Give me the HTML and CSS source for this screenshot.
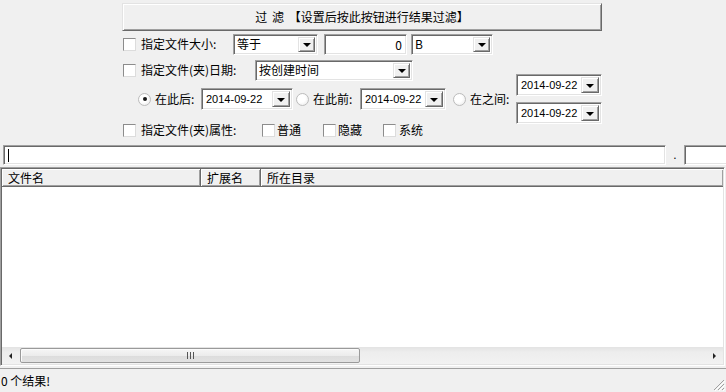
FILE: index.html
```html
<!DOCTYPE html>
<html lang="zh-CN">
<head>
    <meta charset="UTF-8">
    <title>文件过滤</title>
    <link rel="stylesheet" href="styles.css">
</head>
<body>
    <!-- Filter options -->
    <div class="filter-panel">
        <div class="filter-btn">过 滤 【设置后按此按钮进行结果过滤】</div>

        <div class="row row-size">
            <span class="check"></span>
            <span class="label lbl-size">指定文件大小:</span>
            <div class="combo w-op"><span class="combo-text">等于</span><span class="drop"></span></div>
            <div class="field num">0</div>
            <div class="combo w-unit"><span class="combo-text">B</span><span class="drop"></span></div>
        </div>

        <div class="row row-date">
            <span class="check"></span>
            <span class="label lbl-date">指定文件(夹)日期:</span>
            <div class="combo w-mode"><span class="combo-text">按创建时间</span><span class="drop"></span></div>
        </div>

        <div class="row row-range">
            <span class="radio on r-after"></span>
            <span class="label lbl-after">在此后:</span>
            <div class="combo date w-d1"><span class="combo-text">2014-09-22</span><span class="drop"></span></div>
            <span class="radio r-before"></span>
            <span class="label lbl-before">在此前:</span>
            <div class="combo date w-d2"><span class="combo-text">2014-09-22</span><span class="drop"></span></div>
            <span class="radio r-between"></span>
            <span class="label lbl-between">在之间:</span>
            <div class="date-stack">
                <div class="combo date"><span class="combo-text">2014-09-22</span><span class="drop"></span></div>
                <div class="combo date"><span class="combo-text">2014-09-22</span><span class="drop"></span></div>
            </div>
        </div>

        <div class="row row-attr">
            <span class="check"></span>
            <span class="label lbl-attr">指定文件(夹)属性:</span>
            <span class="check"></span>
            <span class="label lbl-normal">普通</span>
            <span class="check"></span>
            <span class="label lbl-hidden">隐藏</span>
            <span class="check"></span>
            <span class="label lbl-system">系统</span>
        </div>
    </div>

    <!-- Path / extension inputs -->
    <div class="path-row">
        <div class="field path-input"><span class="caret"></span></div>
        <span class="dot">.</span>
        <div class="field ext-input"></div>
    </div>

    <!-- Result list -->
    <div class="listview">
        <div class="lv-head">
            <span class="col c-name">文件名</span>
            <span class="col c-ext">扩展名</span>
            <span class="col c-dir">所在目录</span>
        </div>
        <div class="lv-body"></div>
        <div class="hscroll">
            <span class="arrow left"></span>
            <div class="track">
                <div class="thumb"><span class="grip"></span></div>
            </div>
            <span class="arrow right"></span>
        </div>
    </div>

    <!-- Status bar -->
    <div class="statusbar">
        <span class="status-text">0 个结果!</span>
        <svg class="size-grip" width="12" height="12" viewBox="0 0 12 12">
            <path d="M11 1 L1 11 M11 5 L5 11 M11 9 L9 11" stroke="#a0a0a0" stroke-width="1"/>
            <path d="M12 2 L2 12 M12 6 L6 12 M12 10 L10 12" stroke="#ffffff" stroke-width="1"/>
        </svg>
    </div>
</body>
</html>
```

FILE: styles.css
```css
/* Base window */
* {
    box-sizing: border-box;
}

body {
    margin: 0;
    width: 726px;
    height: 392px;
    overflow: hidden;
    background-color: #f0f0f0;
    font-family: "Noto Sans CJK SC", "Liberation Sans", sans-serif;
    font-size: 12px;
    line-height: 16px;
    color: #000;
}

/* Filter options panel */
.filter-panel {
    margin-left: 122px;
    width: 480px;
    padding-top: 3px;
}

.filter-btn {
    height: 28px;
    display: flex;
    align-items: center;
    justify-content: center;
    white-space: pre;
    word-spacing: 2px;
    border: 1px solid;
    border-color: #e3e3e3 #696969 #696969 #e3e3e3;
    box-shadow: inset 1px 1px #fff, inset -1px -1px #a0a0a0;
}

.row {
    display: flex;
    align-items: center;
    white-space: nowrap;
}

.row-size { height: 22px; margin-top: 2px; }
.row-date { height: 22px; margin-top: 4px; }
.row-range { height: 22px; margin-top: 7px; }
.row-attr { height: 18px; margin-top: 11px; }

.label {
    flex-shrink: 0;
}

.lbl-size { margin-left: 5px; width: 92px; }
.lbl-date { margin-left: 5px; width: 114px; }
.lbl-attr { margin-left: 5px; width: 121px; }
.lbl-normal { margin-left: 2px; width: 46px; }
.lbl-hidden { margin-left: 2px; width: 45px; }
.lbl-system { margin-left: 3px; }
.lbl-after { margin-left: 4px; width: 46px; }
.lbl-before { margin-left: 4px; width: 47px; }
.lbl-between { margin-left: 4px; width: 46px; }

/* Check boxes and radio buttons */
.check {
    flex-shrink: 0;
    width: 13px;
    height: 13px;
    margin-left: 1px;
    background-color: #fff;
    border: 1px solid;
    border-color: #8c8c8c #dcdcdc #dcdcdc #8c8c8c;
}

.row-attr .check + .label + .check {
    margin-left: 0;
}

.radio {
    flex-shrink: 0;
    width: 13px;
    height: 13px;
    border-radius: 50%;
    border: 1px solid #bcbcbc;
    background: radial-gradient(circle at 40% 40%, #fff 40%, #e6e6e6 100%);
    display: flex;
    align-items: center;
    justify-content: center;
}

.radio.on::after {
    content: "";
    width: 4px;
    height: 4px;
    border-radius: 50%;
    background-color: #1a1a1a;
}

.r-after { margin-left: 16px; }
.r-before { margin-left: 3px; }
.r-between { margin-left: 7px; }

/* Sunken fields */
.field,
.combo {
    flex-shrink: 0;
    background-color: #fff;
    border: 1px solid;
    border-color: #a0a0a0 #fff #fff #a0a0a0;
    box-shadow: inset 1px 1px #696969, inset -1px -1px #e3e3e3;
}

.field.num {
    margin-left: 6px;
    width: 83px;
    height: 21px;
    padding-right: 4px;
    text-align: right;
    line-height: 19px;
}

/* Combo boxes */
.combo {
    display: flex;
    align-items: stretch;
    height: 21px;
    padding: 2px;
}

.combo-text {
    flex: 1;
    padding-left: 1px;
    display: flex;
    align-items: center;
    overflow: hidden;
}

.drop {
    width: 17px;
    background-color: #f0f0f0;
    border: 1px solid;
    border-color: #e3e3e3 #696969 #696969 #e3e3e3;
    box-shadow: inset 1px 1px #fff, inset -1px -1px #a0a0a0;
    display: flex;
    align-items: center;
    justify-content: center;
}

.drop::after {
    content: "";
    border-top: 4px solid #000;
    border-left: 4px solid transparent;
    border-right: 4px solid transparent;
    margin-top: 1px;
}

.w-op { width: 85px; }
.w-unit { width: 82px; margin-left: 4px; }
.w-mode { width: 158px; }

.combo.date {
    height: 22px;
    width: 86px;
}

.combo.date .combo-text {
    font-family: "Liberation Sans", sans-serif;
    font-size: 11px;
    padding-left: 2px;
}

.combo.date .drop {
    width: 18px;
}

.combo.date.w-d1 { width: 92px; }

.date-stack {
    flex-shrink: 0;
    display: flex;
    flex-direction: column;
    gap: 6px;
}

/* Path row */
.path-row {
    display: flex;
    align-items: center;
    margin-top: 6px;
    margin-left: 3px;
}

.path-input {
    width: 663px;
    height: 20px;
    padding: 3px 4px;
}

.caret {
    display: block;
    width: 1px;
    height: 13px;
    background-color: #000;
}

.dot {
    flex-shrink: 0;
    width: 18px;
    text-align: center;
    font-family: "Liberation Sans", sans-serif;
    line-height: 20px;
    color: #000;
}

.ext-input {
    width: 44px;
    height: 20px;
}

/* Result list */
.listview {
    margin-top: 2px;
    width: 725px;
    height: 199px;
    display: flex;
    flex-direction: column;
    background-color: #fff;
    border: 1px solid;
    border-color: #a0a0a0 #fff #fff #a0a0a0;
    box-shadow: inset 1px 1px #696969, inset -1px -1px #e3e3e3;
    padding: 1px;
}

.lv-head {
    display: flex;
    height: 18px;
    flex-shrink: 0;
}

.col {
    background-color: #f0f0f0;
    padding-left: 6px;
    line-height: 17px;
    border-right: 1px solid #696969;
    border-bottom: 1px solid #696969;
    box-shadow: inset 1px 1px #fff, inset -1px -1px #a0a0a0;
}

.c-name { width: 199px; }
.c-ext { width: 60px; }
.c-dir { flex: 1; border-right: none; }

.lv-body {
    flex: 1;
}

/* Horizontal scroll bar */
.hscroll {
    height: 17px;
    flex-shrink: 0;
    display: flex;
    background: linear-gradient(#e3e3e3, #ededed 30%, #f2f2f2);
}

.arrow {
    width: 17px;
    display: flex;
    align-items: center;
    justify-content: center;
}

.arrow.left::after {
    content: "";
    border-right: 3px solid #222;
    border-top: 3px solid transparent;
    border-bottom: 3px solid transparent;
}

.arrow.right::after {
    content: "";
    border-left: 3px solid #222;
    border-top: 3px solid transparent;
    border-bottom: 3px solid transparent;
}

.track {
    flex: 1;
    padding: 1px 0;
}

.thumb {
    width: 340px;
    height: 100%;
    margin-left: 1px;
    border: 1px solid #9a9a9a;
    border-radius: 2px;
    background: linear-gradient(#f6f6f6, #ececec 50%, #dcdcdc 51%, #e2e2e2);
    box-shadow: inset 1px 1px #fbfbfb;
    display: flex;
    align-items: center;
    justify-content: center;
}

.grip {
    width: 7px;
    height: 7px;
    background: repeating-linear-gradient(90deg, #555 0 1px, transparent 1px 3px);
}

/* Status bar */
.statusbar {
    margin-top: 2px;
    height: 24px;
    border-top: 1px solid #a0a0a0;
    display: flex;
    align-items: center;
    padding-left: 1px;
}

.size-grip {
    margin-left: auto;
    align-self: flex-end;
    margin-bottom: 1px;
    margin-right: 1px;
}
```
